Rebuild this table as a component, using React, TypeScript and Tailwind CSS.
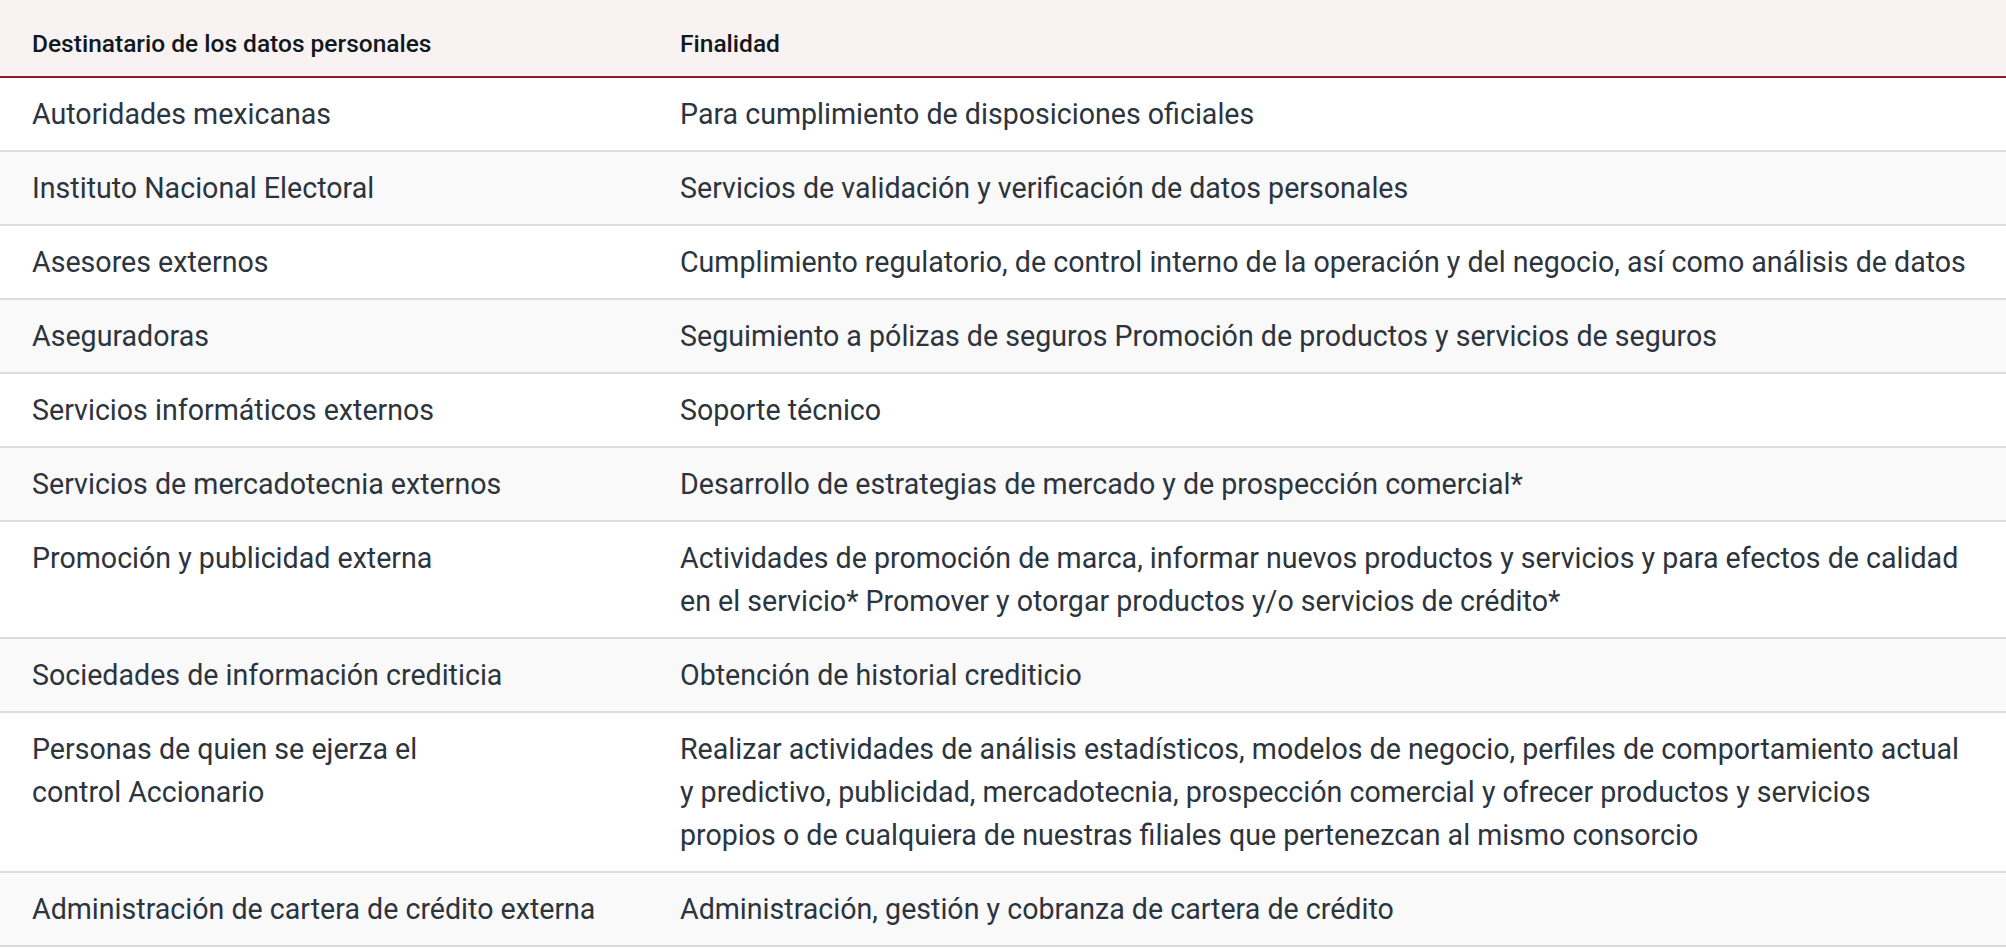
const rows: { to: React.ReactNode; purpose: string }[] = [
  { to: "Autoridades mexicanas", purpose: "Para cumplimiento de disposiciones oficiales" },
  { to: "Instituto Nacional Electoral", purpose: "Servicios de validación y verificación de datos personales" },
  {
    to: "Asesores externos",
    purpose:
      "Cumplimiento regulatorio, de control interno de la operación y del negocio, así como análisis de datos",
  },
  {
    to: "Aseguradoras",
    purpose: "Seguimiento a pólizas de seguros Promoción de productos y servicios de seguros",
  },
  { to: "Servicios informáticos externos", purpose: "Soporte técnico" },
  {
    to: "Servicios de mercadotecnia externos",
    purpose: "Desarrollo de estrategias de mercado y de prospección comercial*",
  },
  {
    to: "Promoción y publicidad externa",
    purpose:
      "Actividades de promoción de marca, informar nuevos productos y servicios y para efectos de calidad en el servicio* Promover y otorgar productos y/o servicios de crédito*",
  },
  { to: "Sociedades de información crediticia", purpose: "Obtención de historial crediticio" },
  {
    to: (
      <>
        Personas de quien se ejerza el
        <br />
        control Accionario
      </>
    ),
    purpose:
      "Realizar actividades de análisis estadísticos, modelos de negocio, perfiles de comportamiento actual y predictivo, publicidad, mercadotecnia, prospección comercial y ofrecer productos y servicios propios o de cualquiera de nuestras filiales que pertenezcan al mismo consorcio",
  },
  {
    to: "Administración de cartera de crédito externa",
    purpose: "Administración, gestión y cobranza de cartera de crédito",
  },
];

export default function App() {
  return (
    <div className="w-full bg-white font-['Roboto',sans-serif]">
      {/* Header */}
      <div className="grid grid-cols-[648px_1fr] bg-[#f8f2f2] border-b-2 border-[#8b1a2b]">
        <div className="pl-8 pt-[30px] pb-[18px] text-[24.5px] leading-[28px] font-medium text-[#101820]">
          Destinatario de los datos personales
        </div>
        <div className="pl-8 pr-8 pt-[30px] pb-[18px] text-[24.5px] leading-[28px] font-medium text-[#101820]">
          Finalidad
        </div>
      </div>

      {/* Rows */}
      {rows.map((r, i) => (
        <div
          key={i}
          className={
            "grid grid-cols-[648px_1fr] border-b-2 border-[#dcdcdc] text-[28.6px] leading-[43px] text-[#2c343e] " +
            (i % 2 === 0 ? "bg-white" : "bg-[#f9f9f9]")
          }
        >
          <div className="pl-8 py-[14.5px]">{r.to}</div>
          <div className="pl-8 pr-[38px] py-[14.5px]">{r.purpose}</div>
        </div>
      ))}
    </div>
  );
}
